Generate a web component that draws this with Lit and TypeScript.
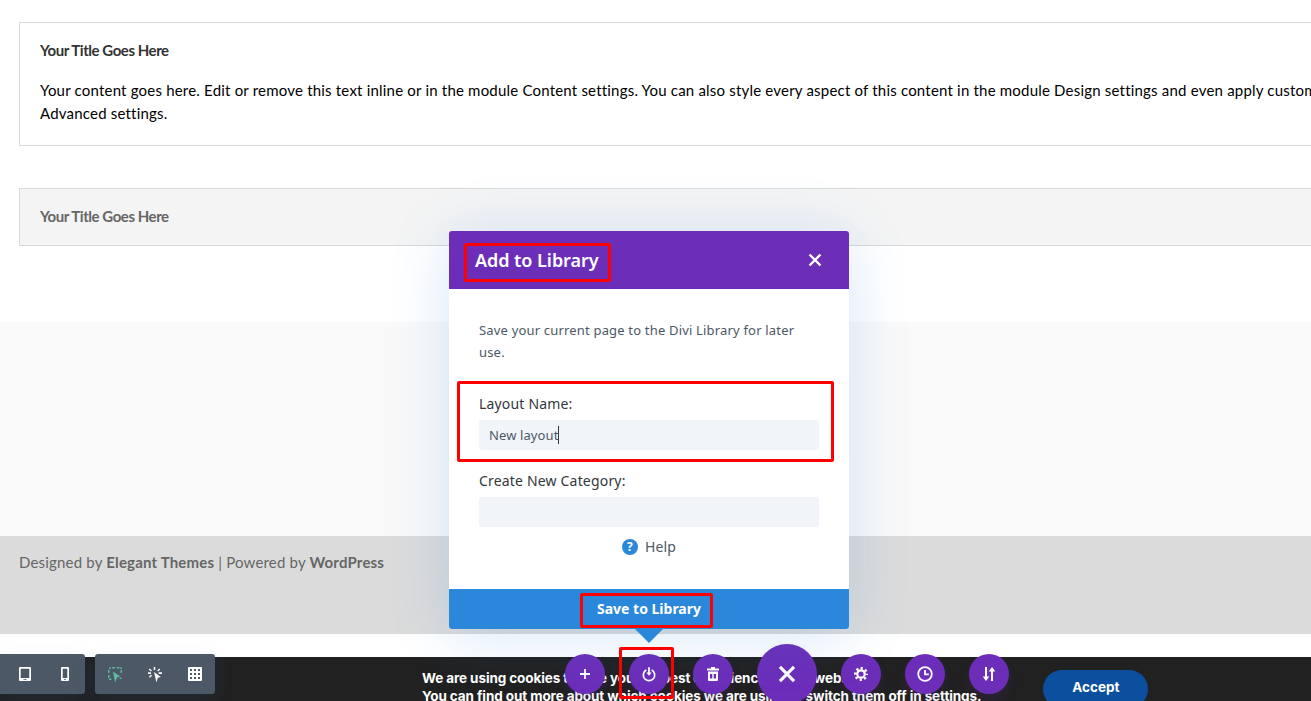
import { LitElement, html, css, svg } from "lit";
import { customElement } from "lit/decorators.js";

const I = {
  tablet: svg`<path fill="#fff" fill-rule="evenodd" d="M2 0h10a1 1 0 0 1 1 1v12a1 1 0 0 1-1 1H2a1 1 0 0 1-1-1V1a1 1 0 0 1 1-1zM2.700 1.800v9.200h8.600V1.800zM5.500 12v.8h3V12z"/>`,
  phone: svg`<path fill="#fff" fill-rule="evenodd" d="M4 0h6a1 1 0 0 1 1 1v12a1 1 0 0 1-1 1H4a1 1 0 0 1-1-1V1a1 1 0 0 1 1-1zM4.700 1.800v9.200h4.600V1.800zM6 12v.8h2V12z"/>`,
  select: svg`<g fill="#5fb79c"><path d="M5 4.500 L12.300 9.500 9.300 10.300 7 15.500z"/><rect x="4" y="0" width="3" height="1.500" rx=".5"/><rect x="8.500" y="0" width="3" height="1.500" rx=".5"/><rect x="0" y="3" width="1.500" height="3" rx=".5"/><rect x="0" y="8" width="1.500" height="3" rx=".5"/><rect x="12.500" y="3" width="1.500" height="3" rx=".5"/><rect x="1" y=".4" width="2" height="1.500" rx=".5"/><rect x="12" y=".4" width="2" height="1.500" rx=".5"/><rect x="1" y="11.500" width="2.500" height="1.500" rx=".5"/><rect x="11.500" y="10.500" width="2" height="1.500" rx=".5"/></g>`,
  click: svg`<g fill="#fff"><path d="M6 5 12.800 10 9.800 10.800 8.500 15.500z"/><rect x="5.700" y="0" width="1.600" height="3" rx=".5"/><rect x="0" y="5.300" width="3" height="1.600" rx=".5"/><rect x="10.500" y="5.300" width="3.500" height="1.600" rx=".5"/><path d="M1.700 1.500l2.200 2-1 1-2.100-2zM11.300 1.500l1 1-2.100 2-1-1zM3 7.700l1 1-2.100 2-1-1z"/></g>`,
  grid: svg`<path fill="#fff" fill-rule="evenodd" d="M1 0h12a1 1 0 0 1 1 1v12a1 1 0 0 1-1 1H1a1 1 0 0 1-1-1V1a1 1 0 0 1 1-1zM2 2v2h2V2zM6 2v2h2V2zM10 2v2h2V2zM2 6v2h2V6zM6 6v2h2V6zM10 6v2h2V6zM2 10v2h2v-2zM6 10v2h2v-2zM10 10v2h2v-2z"/>`,
  plus: svg`<path fill="#fff" d="M6.100 2h1.800v4.100H12v1.800H7.900V12H6.100V7.900H2V6.100h4.100z"/>`,
  power: svg`<path fill="none" stroke="#fff" stroke-width="1.700" stroke-linecap="round" d="M3.800 3.300a5.700 5.700 0 1 0 6.400 0"/><path fill="#fff" d="M6.100 .3h1.800v5.200h1.800L7 8.800 4.300 5.500h1.800z"/>`,
  trash: svg`<path fill="#fff" fill-rule="evenodd" d="M5 0h4v1.500h4v2H1v-2h4zM2 4.500h10V13a1 1 0 0 1-1 1H3a1 1 0 0 1-1-1zM4 7v4.500h2.300V7zM7.700 7v4.500H10V7z"/>`,
  gear: svg`<circle cx="7" cy="7" r="3.700" fill="none" stroke="#fff" stroke-width="2.200"/><circle cx="7" cy="7" r="5.700" fill="none" stroke="#fff" stroke-width="2.600" stroke-dasharray="2.200 2.278" stroke-dashoffset="1.100"/>`,
  clock: svg`<path fill="none" stroke="#fff" stroke-width="1.800" d="M7 .2a6.800 6.800 0 1 1 0 13.600A6.800 6.800 0 0 1 7 .2z"/><path fill="none" stroke="#fff" stroke-width="1.800" d="M7 3v4.300h3.800"/>`,
  sort: svg`<path fill="#fff" d="M3 0h2v9.500h2.300L4 14 .7 9.500H3zM9 14h2V4.500h2.300L10 0 6.700 4.500H9z"/>`,
};

@customElement("app-root")
export class AppRoot extends LitElement {
  static styles = css`
    :host { display: block; position: relative; width: 1311px; height: 701px; overflow: hidden; background: #fff; font-family: "Noto Sans", sans-serif; }
    .page { display: flex; flex-direction: column; height: 701px; font-family: Lato, sans-serif; }
    .content { flex: none; height: 322px; padding: 22px 0 0 19px; box-sizing: border-box; }
    .toggle { width: 1500px; box-sizing: border-box; border: 1px solid #d9d9d9; padding: 19px 20px 20px; }
    .toggle.open { height: 124px; margin-bottom: 42px; }
    .toggle.closed { height: 58px; background: #f4f4f4; padding-top: 19px; }
    .toggle h5 { margin: 0; font-size: 15px; line-height: 17px; font-weight: 700; color: #333; letter-spacing: -.45px; }
    .toggle.closed h5 { color: #666; }
    .toggle p { margin: 20px 0 0; font-size: 15px; line-height: 23px; color: #000; letter-spacing: .2px; white-space: nowrap; }
    .light { flex: none; height: 214px; background: #f9f9f9; }
    .footer { flex: none; height: 98px; box-sizing: border-box; background: #dbdbdb; padding: 16px 19px; font-size: 15px; line-height: 20px; color: #666; letter-spacing: .18px; }
    .gap { flex: none; height: 23px; }
    .cookie { flex: none; height: 44px; background: #212121; display: flex; padding-left: 422px; font-family: Inter, sans-serif; overflow: hidden; }
    .cookie .msg { padding-top: 12px; color: #fff; font-weight: 700; font-size: 13.5px; line-height: 18px; white-space: nowrap; letter-spacing: -.1px; }
    .accept { margin: 13px 0 0 62px; width: 105px; height: 38px; flex: none; border-radius: 19px; background: #0b4f9e; color: #fff; font-weight: 700; font-size: 13.5px; line-height: 34px; text-align: center; }

    .modal { position: absolute; left: 449px; top: 231px; width: 400px; height: 398px; display: flex; flex-direction: column; background: #fff; border-radius: 3px; box-shadow: 0 5px 60px rgba(43,135,218,.2); }
    .head { height: 58px; flex: none; box-sizing: border-box; padding: 0 26px; display: flex; align-items: center; justify-content: space-between; background: #6c2eb9; border-radius: 3px 3px 0 0; color: #fff; font-size: 18px; font-weight: 600; letter-spacing: -.05px; }
    .head svg { width: 14px; height: 14px; margin-right: 1px; }
    .body { flex: 1; padding: 30px 30px 0; color: #4c5866; font-size: 13px; letter-spacing: .18px; }
    .body p { margin: 0; line-height: 22px; }
    .body label { display: block; font-size: 14px; line-height: 20px; color: #32373c; letter-spacing: .18px; }
    .l1 { margin-top: 31px; }
    .l2 { margin-top: 21px; }
    .field { margin-top: 6px; height: 30px; box-sizing: border-box; padding-left: 10px; border-radius: 3px; background: #f1f5f9; font-size: 13px; line-height: 30px; letter-spacing: .1px; display: flex; }
    .caret { display: inline-block; width: 1px; height: 18px; background: #32373c; margin-top: 6px; }
    .help { margin-top: 9px; display: flex; justify-content: center; align-items: center; gap: 7px; font-size: 14px; line-height: 22px; letter-spacing: .15px; }
    .help svg { width: 16px; height: 16px; }
    .save { height: 40px; box-sizing: border-box; padding-bottom: 2px; flex: none; border-radius: 0 0 3px 3px; background: #2b87da; color: #fff; font-size: 14px; font-weight: 700; display: flex; align-items: center; justify-content: center; }
    .arrow { position: absolute; left: 635px; top: 629px; width: 0; height: 0; border: solid transparent; border-width: 14px 14px 0; border-top-color: #2b87da; }

    .tools { position: absolute; top: 654px; height: 40px; display: flex; align-items: center; background: #4c5866; border-radius: 3px; box-shadow: 0 5px 20px rgba(43,135,218,.1); }
    .tools.a { left: 0; width: 85px; padding-left: 5px; box-sizing: border-box; border-radius: 0 3px 3px 0; }
    .tools.b { left: 95px; }
    .tool { width: 40px; display: flex; justify-content: center; }
    .tool svg { width: 14px; height: 14px; display: block; overflow: visible; }

    .fab { position: absolute; top: 654px; width: 40px; height: 40px; border-radius: 50%; background: #6c2eb9; display: flex; align-items: center; justify-content: center; box-shadow: 0 5px 10px rgba(108,46,185,.15); }
    .fab svg { width: 14px; height: 14px; overflow: visible; }
    .fab.big { top: 644px; width: 60px; height: 60px; }
    .fab.big svg { width: 18px; height: 18px; }

    .red { position: absolute; box-sizing: border-box; border: 3px solid #f00; border-radius: 2px; }
  `;

  render() {
    const fabs: [number, any][] = [[565, I.plus], [629, I.power], [693, I.trash], [841, I.gear], [905, I.clock], [969, I.sort]];
    const x = svg`<path d="M1.500 1.500l11 11M12.500 1.500l-11 11" stroke="#fff" stroke-width="2.400" fill="none"/>`;
    return html`
      <div class="page">
        <div class="content">
          <div class="toggle open">
            <h5>Your Title Goes Here</h5>
            <p>Your content goes here. Edit or remove this text inline or in the module Content settings. You can also style every aspect of this content in the module Design settings and even apply custom CSS to this text in the module<br>Advanced settings.</p>
          </div>
          <div class="toggle closed"><h5>Your Title Goes Here</h5></div>
        </div>
        <div class="light"></div>
        <div class="footer">Designed by <b>Elegant Themes</b> | Powered by <b>WordPress</b></div>
        <div class="gap"></div>
        <div class="cookie">
          <div class="msg">We are using cookies to give you the best experience on our website.<br>You can find out more about which cookies we are using or switch them off in settings.</div>
          <div class="accept">Accept</div>
        </div>
      </div>

      <div class="tools a">
        <div class="tool"><svg viewBox="0 0 14 14">${I.tablet}</svg></div>
        <div class="tool"><svg viewBox="0 0 14 14">${I.phone}</svg></div>
      </div>
      <div class="tools b">
        <div class="tool"><svg viewBox="0 0 14 14">${I.select}</svg></div>
        <div class="tool"><svg viewBox="0 0 14 14">${I.click}</svg></div>
        <div class="tool"><svg viewBox="0 0 14 14">${I.grid}</svg></div>
      </div>

      ${fabs.map(([l, ic]) => html`<div class="fab" style="left:${l}px"><svg viewBox="0 0 14 14">${ic}</svg></div>`)}
      <div class="fab big" style="left:757px"><svg viewBox="0 0 14 14">${x}</svg></div>

      <div class="modal">
        <div class="head"><span>Add to Library</span><svg viewBox="0 0 14 14">${x}</svg></div>
        <div class="body">
          <p>Save your current page to the Divi Library for later use.</p>
          <label class="l1">Layout Name:</label>
          <div class="field"><span>New layout</span><span class="caret"></span></div>
          <label class="l2">Create New Category:</label>
          <div class="field"></div>
          <div class="help">
            <svg viewBox="0 0 16 16"><circle cx="8" cy="8" r="8" fill="#2b87da"/><text x="8" y="12.300" text-anchor="middle" font-size="12" font-weight="700" fill="#fff" font-family="Noto Sans">?</text></svg>
            <span>Help</span>
          </div>
        </div>
        <div class="save">Save to Library</div>
      </div>
      <div class="arrow"></div>

      <div class="red" style="left:464px;top:243px;width:147px;height:39px"></div>
      <div class="red" style="left:457px;top:381px;width:377px;height:81px"></div>
      <div class="red" style="left:580px;top:593px;width:133px;height:35px"></div>
      <div class="red" style="left:619px;top:647px;width:55px;height:52px"></div>
    `;
  }
}
